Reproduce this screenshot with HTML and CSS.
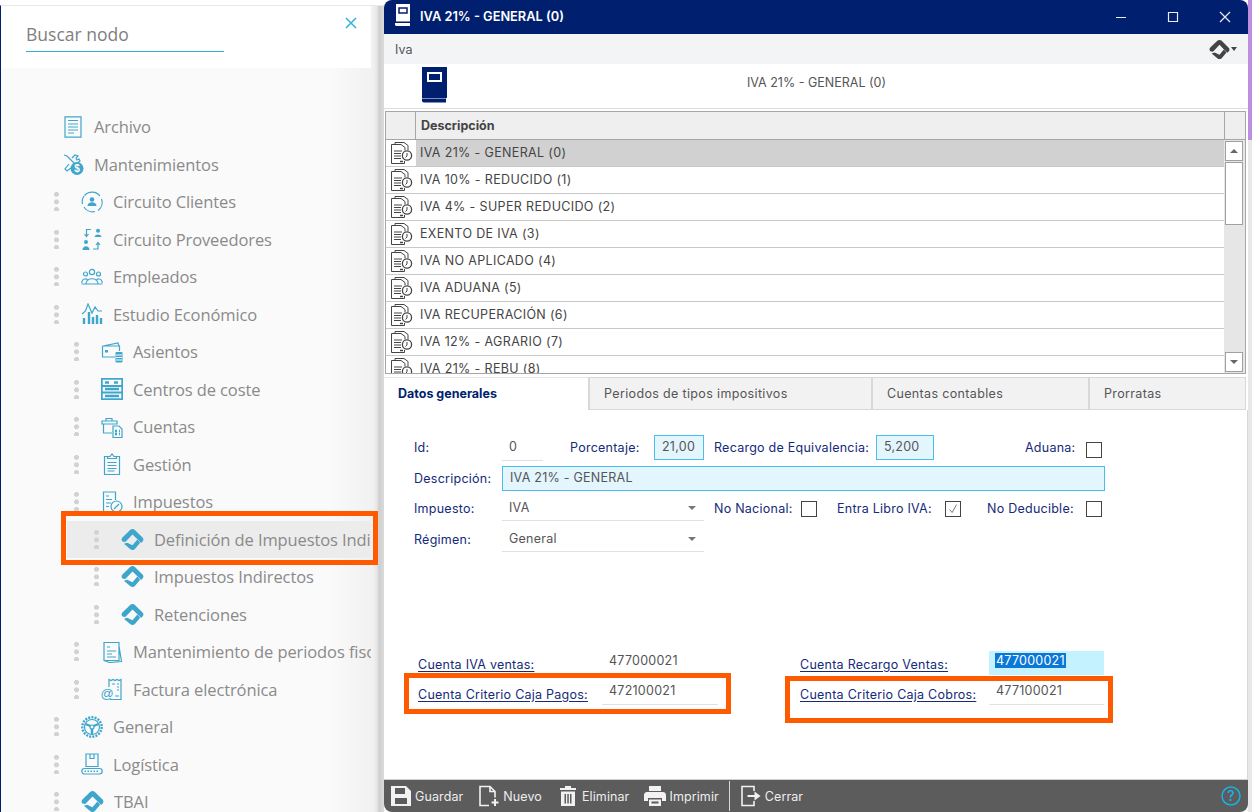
FILE: index.html
```html
<!DOCTYPE html>
<html lang="es">
<head>
<meta charset="utf-8">
<title>IVA 21% - GENERAL (0)</title>
<link rel="stylesheet" href="styles.css">
</head>
<body>
<svg class="defs" width="0" height="0" aria-hidden="true">
  <defs>
    <symbol id="logo" viewBox="0 0 24 24">
      <path d="M12 1c1 0 1.800.4 2.500 1l8 8c1.200 1.200 1.200 3 0 4.200L21 15.700 16.300 11 12 6.700 7 12l-2.500 2.700L1.500 14c-1.200-1.200-1.200-3 0-4.200l8-7.800C10.200 1.300 11 1 12 1z" fill="currentColor"/>
      <path d="M6.500 15.500 12 18l5-6 3 3.500-5.500 6.500c-1.400 1.300-3.600 1.300-5 0L3 16.500z" fill="currentColor"/>
    </symbol>
    <symbol id="rowdoc" viewBox="0 0 24 24" fill="none" stroke="#444" stroke-width="1">
      <path d="M6 3.500V1.500h9l4 3v5"/><path d="M2.500 22.500V3.500H12l4 3v3"/><path d="M2.500 22.500H15.500V20"/>
      <path d="M5 10h8M5 12.500h7M5 15h7M5 17.500h7"/><circle cx="18" cy="14.500" r="4.600" stroke-width="1.300"/><path d="M18 12v3l-1.500 1.500"/><path d="M11 20.500h3" stroke-width="1.500"/>
    </symbol>
  </defs>
</svg>

<main class="desktop">
  <aside class="sidebar">
    <header class="search">
      <span class="search-field">Buscar nodo</span>
      <svg class="search-close" viewBox="0 0 12 12"><path d="M1 1l10 10M11 1 1 11"/></svg>
    </header>
    <nav class="tree">
      <div class="node lv0"><svg class="ico" viewBox="0 0 22 22"><path d="M3 .8h16v20.400H3zM6 4.500h10M6 8h10M6 11h10M6 14h10M6 17h6"/></svg><span>Archivo</span></div>
      <div class="node lv0"><svg class="ico" viewBox="0 0 22 22"><path d="M2 2l3 1 8 8M10 5l3-3 3 1-2 2 1 2 2-1 1 2-9 7-4 3-2-2 4-5"/><circle class="fill" cx="15" cy="15.500" r="6.500"/><text class="dollar" x="15" y="19" text-anchor="middle">$</text></svg><span>Mantenimientos</span></div>

      <div class="node lv1"><i class="dots"></i><svg class="ico" viewBox="0 0 22 22"><path d="M3.500 4.500A10 10 0 0 1 19 5M20.500 8A10 10 0 0 1 17 19.500M14 20.500A10 10 0 0 1 3 16M1.500 13A10 10 0 0 1 3 5"/><circle class="fill" cx="11" cy="8.500" r="2.300"/><path class="fill" d="M6.500 15c0-5 9-5 9 0z"/></svg><span>Circuito Clientes</span></div>
      <div class="node lv1"><i class="dots"></i><svg class="ico" viewBox="0 0 22 22"><circle class="fill" cx="17" cy="2.800" r="2"/><path class="fill" d="M13.500 9c0-3.500 7-3.500 7 0z"/><circle class="fill" cx="5" cy="14" r="2"/><path class="fill" d="M1.500 22c0-5 7-5 7 0z"/><path d="M10 1.500H5.500V8M3.500 6l2 2.500 2-2.500M12 21h5v-6M15 17l2-2.500 2 2.500"/></svg><span>Circuito Proveedores</span></div>
      <div class="node lv1"><i class="dots"></i><svg class="ico" viewBox="0 0 22 22"><circle cx="11" cy="6" r="2.600"/><circle cx="4.500" cy="8" r="2"/><circle cx="17.500" cy="8" r="2"/><path d="M.8 17c0-5 6-5 6-2M21.200 17c0-5-6-5-6-2M5 18c0-7 12-7 12 0M.5 18h21"/></svg><span>Empleados</span></div>
      <div class="node lv1"><i class="dots"></i><svg class="ico" viewBox="0 0 22 22"><path d="M1 11l3.500-3L7 1l4 9 3-6 3 4h4"/><path class="thick" d="M3 21v-6M8 21V9M12 21v-7M16 21v-9M20 21v-6"/></svg><span>Estudio Económico</span></div>

      <div class="node lv2"><i class="dots"></i><svg class="ico" viewBox="0 0 22 22"><path d="M2 5 17 2l1 3M1.500 5h17v5M14 16H1.500V5"/><rect class="fill" x="4" y="9" width="3" height="2.500"/><rect class="fill" x="14.500" y="11" width="7" height="10.500" rx="1"/><path class="gap" d="M15 14h6M15 16.500h6M15 19h6"/></svg><span>Asientos</span></div>
      <div class="node lv2"><i class="dots"></i><svg class="ico ico-strong" viewBox="0 0 22 22"><rect x=".8" y=".8" width="20.400" height="20.400"/><path d="M.8 8h20.400M.8 14.500h20.400"/><path class="thick" d="M4 4.500h4M13 4.500h4M4 11h14M4 18h14"/></svg><span>Centros de coste</span></div>
      <div class="node lv2"><i class="dots"></i><svg class="ico" viewBox="0 0 22 22"><path d="M1 5h15v3H1zM2.500 8v9H11M5 5V2.500h6V5M12 10h6l3 3v8.500H12z"/><path class="thick" d="M14 15h2M18 15h1M14 18h2M18 18h1"/></svg><span>Cuentas</span></div>
      <div class="node lv2"><i class="dots"></i><svg class="ico" viewBox="0 0 22 22"><path d="M6 3.500H3.500v18h15v-18H16M6.500 5.500h9v-2H13L11 1 9 3.500H6.500zM6.500 9.500h9M6.500 12.500h9M6.500 15.500h9M6.500 18h7"/></svg><span>Gestión</span></div>
      <div class="node lv2"><i class="dots"></i><svg class="ico" viewBox="0 0 22 22"><path d="M10 20.500H2.500V1h12v8M5 5h3M5 8.500h6M5 12h5M5 15.500h3"/><circle cx="15.500" cy="15.500" r="5.500"/><path d="M13 18l5-5"/></svg><span>Impuestos</span></div>

      <div class="node lv3 selected"><i class="dots"></i><svg class="logo"><use href="#logo"/></svg><span>Definición de Impuestos Indirectos</span></div>
      <div class="node lv3"><i class="dots"></i><svg class="logo"><use href="#logo"/></svg><span>Impuestos Indirectos</span></div>
      <div class="node lv3"><i class="dots"></i><svg class="logo"><use href="#logo"/></svg><span>Retenciones</span></div>

      <div class="node lv2"><i class="dots"></i><svg class="ico" viewBox="0 0 22 22"><path d="M3 1.500h15v18H3zM18 5l2.500 15.500-12 1L3 19.500M6 6h3M6 10h9M6 13h5M6 16h9"/></svg><span>Mantenimiento de periodos fiscales</span></div>
      <div class="node lv2"><i class="dots"></i><svg class="ico" viewBox="0 0 22 22"><path d="M8 9V1.500l2 1 2-1 2 1 2-1 2 1 2-1v20H9M11 6h3M16 6h2M16 9h2M16 12h2M14 18h4"/><text class="at" x="6" y="20" text-anchor="middle">@</text></svg><span>Factura electrónica</span></div>

      <div class="node lv1"><i class="dots"></i><svg class="ico" viewBox="0 0 22 22"><circle class="thickdash" cx="11" cy="11" r="9.700"/><circle cx="11" cy="11" r="7.500"/><circle cx="11" cy="11" r="2"/><path class="thick" d="M11 13v5M9.500 10 4.500 8M12.500 10l5-2"/></svg><span>General</span></div>
      <div class="node lv1"><i class="dots"></i><svg class="ico" viewBox="0 0 22 22"><path d="M5 1h12v12.500H5zM9 1v4.500h4V1"/><rect x=".8" y="15.500" width="20.400" height="5.500" rx="2.700"/><path class="dash" d="M3.500 18.300h15"/></svg><span>Logística</span></div>
      <div class="node lv1"><i class="dots"></i><svg class="logo"><use href="#logo"/></svg><span>TBAI</span></div>
    </nav>
    <i class="mark mark-tree"></i>
  </aside>

  <section class="window">
    <header class="titlebar">
      <svg class="book-small" viewBox="0 0 16 22"><path d="M1 0h14v17.500H1z" fill="#fff"/><rect x="4" y="4" width="8" height="5" fill="none" stroke="#001f6f" stroke-width="1.500"/><path d="M0 19h15v3H1.500C.5 22 0 21 0 20.500z" fill="#fff"/></svg>
      <h1>IVA 21% - GENERAL (0)</h1>
      <div class="winctl">
        <svg viewBox="0 0 12 12"><path d="M1 6.500h10"/></svg>
        <svg viewBox="0 0 12 12"><path d="M1.500 1.500h9v9h-9z"/></svg>
        <svg viewBox="0 0 12 12"><path d="M1 1l10 10M11 1 1 11"/></svg>
      </div>
    </header>
    <div class="menubar">
      <span>Iva</span>
      <div class="menu-logo"><svg class="logo logo-dark"><use href="#logo"/></svg><i class="caret"></i></div>
    </div>
    <div class="heading">
      <svg class="book-big" viewBox="0 0 25 36"><path d="M0 0h25v31H0z" fill="#001f6f"/><rect x="6" y="6" width="13" height="8" fill="none" stroke="#fff" stroke-width="2"/><path d="M0 31.500h24v4H2c-1.500 0-2-1-2-2z" fill="#001f6f"/></svg>
      <p>IVA 21% - GENERAL (0)</p>
    </div>

    <div class="grid">
      <div class="grid-head"><i class="h-corner"></i><b>Descripción</b><i class="h-end"></i></div>
      <div class="grid-body">
        <div class="rows">
          <div class="row current"><svg class="rowicon"><use href="#rowdoc"/></svg><span>IVA 21% - GENERAL (0)</span></div>
          <div class="row"><svg class="rowicon"><use href="#rowdoc"/></svg><span>IVA 10% - REDUCIDO (1)</span></div>
          <div class="row"><svg class="rowicon"><use href="#rowdoc"/></svg><span>IVA 4% - SUPER REDUCIDO (2)</span></div>
          <div class="row"><svg class="rowicon"><use href="#rowdoc"/></svg><span>EXENTO DE IVA (3)</span></div>
          <div class="row"><svg class="rowicon"><use href="#rowdoc"/></svg><span>IVA NO APLICADO (4)</span></div>
          <div class="row"><svg class="rowicon"><use href="#rowdoc"/></svg><span>IVA ADUANA (5)</span></div>
          <div class="row"><svg class="rowicon"><use href="#rowdoc"/></svg><span>IVA RECUPERACIÓN (6)</span></div>
          <div class="row"><svg class="rowicon"><use href="#rowdoc"/></svg><span>IVA 12% - AGRARIO (7)</span></div>
          <div class="row"><svg class="rowicon"><use href="#rowdoc"/></svg><span>IVA 21% - REBU (8)</span></div>
        </div>
        <div class="scrollbar">
          <div class="sb-btn"><i class="tri-up"></i></div>
          <div class="sb-thumb"></div>
          <div class="sb-track"></div>
          <div class="sb-btn"><i class="tri-down"></i></div>
        </div>
      </div>
    </div>

    <div class="tabs">
      <div class="tab active">Datos generales</div>
      <div class="tab t2">Periodos de tipos impositivos</div>
      <div class="tab t3">Cuentas contables</div>
      <div class="tab t4">Prorratas</div>
    </div>

    <div class="form">
      <div class="frow r1">
        <label class="lab">Id:</label>
        <span class="field f-id">0</span>
        <label class="l-porc">Porcentaje:</label>
        <span class="field req f-porc">21,00</span>
        <label class="l-rec">Recargo de Equivalencia:</label>
        <span class="field req f-rec">5,200</span>
        <label class="l-adu">Aduana:</label>
        <i class="check"></i>
      </div>
      <div class="frow r2">
        <label class="lab">Descripción:</label>
        <span class="field req f-desc">IVA 21% - GENERAL</span>
      </div>
      <div class="frow r3">
        <label class="lab">Impuesto:</label>
        <span class="field f-sel">IVA<i class="sel-caret"></i></span>
        <label class="l-nac">No Nacional:</label>
        <i class="check"></i>
        <label class="l-lib">Entra Libro IVA:</label>
        <i class="check"><svg viewBox="0 0 16 16"><path d="M4 8.500l3 3.500 5-9"/></svg></i>
        <label class="l-ded">No Deducible:</label>
        <i class="check"></i>
      </div>
      <div class="frow r4">
        <label class="lab">Régimen:</label>
        <span class="field f-sel">General<i class="sel-caret"></i></span>
      </div>

      <div class="accounts">
        <div class="acc">
          <a class="acc-l">Cuenta IVA ventas:</a><span class="field f-acc">477000021</span>
          <a class="acc-r">Cuenta Recargo Ventas:</a><span class="field f-acc2 hl"><em>477000021</em></span>
        </div>
        <div class="acc">
          <a class="acc-l">Cuenta Criterio Caja Pagos:</a><span class="field f-acc line">472100021</span>
          <a class="acc-r">Cuenta Criterio Caja Cobros:</a><span class="field f-acc2 line">477100021</span>
        </div>
      </div>
      <i class="mark mark-pagos"></i>
      <i class="mark mark-cobros"></i>
    </div>

    <footer class="toolbar">
      <span class="tool"><svg viewBox="0 0 22 22"><path class="tf" d="M1 1h15l5 5v15H1zM5 3v6h10V3zM5 13v6h12v-6z" fill-rule="evenodd"/></svg>Guardar</span>
      <span class="tool"><svg viewBox="0 0 22 22"><path class="ts" d="M11 20.500H2V1.500h10l5 5v6M12 1.500v5h5"/><path class="tsb" d="M17 14v7M13.500 17.500h7"/></svg>Nuevo</span>
      <span class="tool"><svg viewBox="0 0 22 22"><path class="tf" d="M3 3h5V1h6v2h5v2H3zM4 6.500h14V21H4zM7.500 9v9.500h1.500V9zM10.300 9v9.500h1.500V9zM13 9v9.500h1.500V9z" fill-rule="evenodd"/></svg>Eliminar</span>
      <span class="tool"><svg viewBox="0 0 22 22"><path class="tf" d="M5 1h12v5H5zM3 7h16c1.500 0 3 1 3 3v6h-4v-3H4v3H0v-6c0-2 1.500-3 3-3zM5 14.500h12V21H5zM7.500 16.500v2h7v-2z" fill-rule="evenodd"/></svg>Imprimir</span>
      <i class="tool-sep"></i>
      <span class="tool"><svg viewBox="0 0 22 22"><path class="ts" d="M14 6V1.500H2v19h12V16"/><path class="tsb" d="M7.500 11h9"/><path class="tf" d="M14.500 6.500 20.500 11l-6 4.500z"/></svg>Cerrar</span>
      <svg class="help" viewBox="0 0 20 20"><circle cx="10" cy="10" r="9"/><text x="10" y="15" text-anchor="middle">?</text></svg>
    </footer>
  </section>
  <div class="edge"><i></i></div>
</main>
</body>
</html>
```
FILE: styles.css
```css
* { box-sizing: border-box; }
html, body { margin: 0; padding: 0; background: #fff; }
.defs { position: absolute; }
i, em { font-style: normal; }

.desktop {
  display: flex;
  width: 1252px;
  height: 812px;
  overflow: hidden;
  padding-top: 0;
}

/* ---------- tree panel ---------- */
.sidebar {
  position: relative;
  flex: 0 0 384px;
  margin-top: 5px;
  background: linear-gradient(90deg, #fafafa 0, #fafafa 330px, #f1f1f1 372px, #e6e6e6 376px, #cfcfcf 378px, #dcdcdc 384px);
  border-left: 1px solid #001f6f;
  border-top: 1px solid #e8e8e8;
  font-family: "Open Sans", "Liberation Sans", sans-serif;
  color: #8a8a8a;
}
.search {
  position: relative;
  height: 62px;
  width: 370px;
  background: #fff;
}
.search-field {
  position: absolute;
  left: 25px;
  top: 15px;
  width: 198px;
  height: 31px;
  border-bottom: 1px solid #33a9d4;
  font-size: 17.500px;
  line-height: 27px;
  color: #808080;
}
.search-close {
  position: absolute;
  left: 344px;
  top: 11px;
  width: 12px;
  height: 12px;
  fill: none;
  stroke: #38b4df;
  stroke-width: 1.600;
}
.tree {
  width: 370px;
  padding-top: 40px;
  overflow: hidden;
  display: flex;
  flex-direction: column;
}
.node {
  position: relative;
  display: flex;
  align-items: center;
  flex: 0 0 37.500px;
  height: 37.500px;
  white-space: nowrap;
  font-size: 16.500px;
  letter-spacing: -.1px;
}
.node span { margin-left: 10px; }
.lv0 { padding-left: 61px; }
.lv1 { padding-left: 80px; }
.lv2 { padding-left: 100px; }
.lv3 { padding-left: 120px; }
.dots {
  position: absolute;
  top: 9px;
  width: 5px;
  height: 19px;
  background: radial-gradient(circle at 2.500px 2.500px, #d2d2d2 2.400px, transparent 2.600px) 0 0 / 5px 7.500px repeat-y;
}
.lv1 .dots { left: 53px; }
.lv2 .dots { left: 73px; }
.lv3 .dots { left: 93px; }
.selected { background: #ececec; margin-left: 66px; padding-left: 54px; }
.selected .dots { left: 27px; }
.ico {
  flex: 0 0 22px;
  width: 22px;
  height: 22px;
  fill: none;
  stroke: #3ea6cc;
  stroke-width: 1.200;
}
.ico .fill { fill: #3ea6cc; stroke: none; }
.ico .thick { stroke-width: 2.400; }
.ico .gap { stroke: #fafafa; stroke-width: 1; }
.ico .dollar { fill: #fff; stroke: none; font: 700 10px "Liberation Sans", sans-serif; }
.ico .at { fill: #3ea6cc; stroke: none; font: 400 13px "Liberation Sans", sans-serif; }
.ico .dash { stroke-width: 1.500; stroke-dasharray: 1.500 1.500; }
.ico .thickdash { stroke-width: 2.400; stroke-dasharray: 2 1.200; }
.ico-strong { stroke-width: 1.800; }
.logo {
  flex: 0 0 23px;
  width: 23px;
  height: 23px;
  color: #3ea6cc;
}
.logo-dark { color: #444; flex-basis: 21px; width: 21px; height: 21px; }

/* ---------- orange highlights ---------- */
.mark {
  position: absolute;
  border: 5px solid #ff5a00;
  pointer-events: none;
}
.mark-tree { left: 60px; top: 505px; width: 317px; height: 54px; }
.mark-pagos { left: 20px; top: 263px; width: 327px; height: 41px; }
.mark-cobros { left: 401px; top: 266px; width: 328px; height: 47px; }

/* ---------- window ---------- */
.window {
  flex: 0 0 864px;
  height: 812px;
  display: flex;
  flex-direction: column;
  background: #fff;
  font-family: Inter, "Liberation Sans", sans-serif;
  font-size: 12.500px;
  color: #444;
  border-radius: 8px 8px 8px 8px;
  overflow: hidden;
}
.titlebar {
  flex: 0 0 34px;
  display: flex;
  align-items: center;
  background: #001f6f;
  padding-left: 11px;
  color: #fff;
}
.book-small { width: 16px; height: 22px; margin-top: -4px; }
.titlebar h1 {
  margin: 0 0 0 9px;
  font-size: 12.800px;
  font-weight: 600;
  line-height: 30px;
}
.winctl {
  margin-left: auto;
  display: flex;
  gap: 40px;
  padding-right: 17px;
}
.winctl svg {
  width: 12px;
  height: 12px;
  fill: none;
  stroke: #e8ecf5;
  stroke-width: 1.200;
}
.menubar {
  flex: 0 0 30px;
  display: flex;
  align-items: center;
  justify-content: space-between;
  background: #f3f4f6;
  padding: 0 11px;
  color: #555;
}
.menu-logo { display: flex; align-items: center; gap: 1px; padding-right: 0; }
.caret {
  width: 0;
  height: 0;
  border: 3.500px solid transparent;
  border-top: 4px solid #444;
  border-bottom: 0;
}
.heading {
  flex: 0 0 45px;
  display: flex;
  align-items: center;
  position: relative;
  padding-left: 38px;
  border-bottom: 1px solid #ddd;
}
.book-big { width: 25px; height: 36px; margin-top: -3px; }
.heading p {
  flex: 1;
  margin: 0 0 0 0;
  padding-right: 62px;
  text-align: center;
  font-size: 12.500px;
  color: #555;
  position: relative;
  top: -4px;
}

/* ---------- grid ---------- */
.grid {
  margin: 2px 2px 0 1px;
  height: 263px;
  border: 1px solid #a6a6a6;
  overflow: hidden;
  display: flex;
  flex-direction: column;
}
.grid-head {
  flex: 0 0 28px;
  display: flex;
  background: #efefef;
  border-bottom: 1px solid #a6a6a6;
  line-height: 27px;
}
.h-corner { flex: 0 0 30px; border-right: 1px solid #a6a6a6; }
.grid-head b { flex: 1; padding-left: 5px; font-weight: 700; color: #444; }
.h-end { flex: 0 0 21px; border-left: 1px solid #a6a6a6; }
.grid-body { flex: 1; display: flex; overflow: hidden; }
.rows { flex: 1; overflow: hidden; }
.row {
  height: 27px;
  display: flex;
  align-items: center;
  border-bottom: 1px solid #c8c8c8;
  background: #fff;
  white-space: nowrap;
}
.row span {
  flex: 1;
  align-self: stretch;
  line-height: 26px;
  padding-left: 4px;
  letter-spacing: .35px;
}
.row.current span { background: #d1d1d1; }
.rowicon { flex: 0 0 30px; width: 30px; height: 24px; padding: 0 2px; }
.scrollbar {
  flex: 0 0 21px;
  display: flex;
  flex-direction: column;
  background: #e6e6e6;
  padding: 1px 2px 1px 1px;
}
.sb-btn {
  flex: 0 0 20px;
  display: flex;
  align-items: center;
  justify-content: center;
  background: #fff;
  border: 1px solid #a0a0a0;
}
.sb-thumb { flex: 0 0 63px; background: #fff; border: 1px solid #a0a0a0; margin-top: 1px; }
.sb-track { flex: 1; }
.tri-up, .tri-down { width: 0; height: 0; border: 4px solid transparent; }
.tri-up { border-bottom: 4px solid #666; border-top: 0; }
.tri-down { border-top: 4px solid #666; border-bottom: 0; }

/* ---------- tabs ---------- */
.tabs {
  flex: 0 0 33px;
  margin-top: 3px;
  display: flex;
  padding-right: 2px;
  background: #fff;
  color: #555;
  letter-spacing: .35px;
}
.tab {
  line-height: 31px;
  background: #f2f2f2;
  border: 1px solid #d8d8d8;
  padding-left: 14px;
}
.tab.active {
  flex: 0 0 205px;
  background: #fff;
  border-width: 0 1px 0 0;
  border-top: 1px solid #e6e6e6;
  color: #001f6f;
  font-weight: 700;
  letter-spacing: 0;
}
.t2 { flex: 0 0 283px; }
.t3 { flex: 0 0 217px; }
.t4 { flex: 1; }

/* ---------- form ---------- */
.form {
  position: relative;
  flex: 1;
  padding: 24px 0 0 30px;
  border-right: 1px solid #d8d8d8;
  color: #152a7a;
  letter-spacing: .25px;
}
.frow { display: flex; align-items: center; white-space: nowrap; }
.lab { flex: 0 0 88px; }
.field { display: block; color: #555; padding-left: 7px; }
.r1 { height: 27px; }
.r2 { height: 26px; margin-top: 4px; }
.r3 { height: 31px; margin-top: 2px; }
.r4 { height: 31px; }
.f-id { flex: 0 0 41px; height: 26px; line-height: 24px; border-bottom: 1px solid #dfe1e8; }
.l-porc { margin-left: 27px; flex: 0 0 84px; }
.req { background: #e3f6fd; border: 1px solid #4abdec; }
.f-porc { flex: 0 0 50px; height: 25px; line-height: 22px; }
.l-rec { margin-left: 10px; flex: 0 0 162px; }
.f-rec { flex: 0 0 58px; height: 25px; line-height: 22px; }
.l-adu { margin-left: 91px; flex: 0 0 61px; }
.check {
  flex: 0 0 16px;
  width: 16px;
  height: 16px;
  border: 1px solid #444;
  background: #fff;
  display: block;
}
.check svg { display: block; width: 14px; height: 14px; fill: none; stroke: #666; stroke-width: 1; }
.r1 .check { margin-top: 4px; }
.f-desc { flex: 0 0 603px; height: 25px; line-height: 22px; }
.f-sel {
  position: relative;
  flex: 0 0 202px;
  height: 25px;
  line-height: 23px;
  border-bottom: 1px solid #dfe1e8;
}
.sel-caret {
  position: absolute;
  right: 8px;
  top: 10px;
  border: 4px solid transparent;
  border-top: 4px solid #777;
  border-bottom: 0;
}
.l-nac { margin-left: 10px; flex: 0 0 87px; }
.l-lib { margin-left: 20px; flex: 0 0 108px; }
.l-ded { margin-left: 26px; flex: 0 0 99px; }
.accounts { margin-top: 94px; padding-left: 4px; display: flex; flex-direction: column; }
.acc { display: flex; align-items: center; height: 30px; white-space: nowrap; }
.acc a { color: #152a7a; text-decoration: underline; text-underline-offset: 2px; }
.acc-l { flex: 0 0 184px; }
.acc-r { flex: 0 0 189px; margin-left: 82px; }
.f-acc { flex: 0 0 116px; height: 24px; line-height: 20px; margin-top: -2px; }
.f-acc2 { flex: 0 0 115px; height: 24px; line-height: 20px; margin-top: -2px; }
.hl { background: #c5f2ff; padding-left: 6px; }
.hl em { background: #0a78d7; color: #fff; padding: 0 1px; }
.line { border-bottom: 1px solid #dfe1e8; }

/* ---------- toolbar ---------- */
.toolbar {
  flex: 0 0 33px;
  display: flex;
  align-items: center;
  background: #5c5c5c;
  border-top: 1px solid #cfcfcf;
  color: #eee;
  padding-left: 6px;
  letter-spacing: .1px;
}
.tool { display: flex; align-items: center; gap: 3px; margin-right: 15px; }
.tool svg { width: 22px; height: 22px; }
.tf { fill: #f2f2f2; }
.ts { fill: none; stroke: #f2f2f2; stroke-width: 1.600; }
.tsb { fill: none; stroke: #f2f2f2; stroke-width: 2; }
.tool-sep { width: 1px; height: 30px; background: #d6d6d6; margin: 0 10px 0 -5px; }
.help {
  margin-left: auto;
  margin-right: 7px;
  width: 20px;
  height: 20px;
  fill: none;
  stroke: #17b2e6;
  stroke-width: 1.500;
}
.help text { fill: #17b2e6; stroke: none; font: 500 14px Inter, sans-serif; }

/* ---------- desktop edge ---------- */
.edge { flex: 0 0 4px; background: #e8e8e8; }
.edge i { display: block; height: 140px; background: #bb8ee0; }
```
